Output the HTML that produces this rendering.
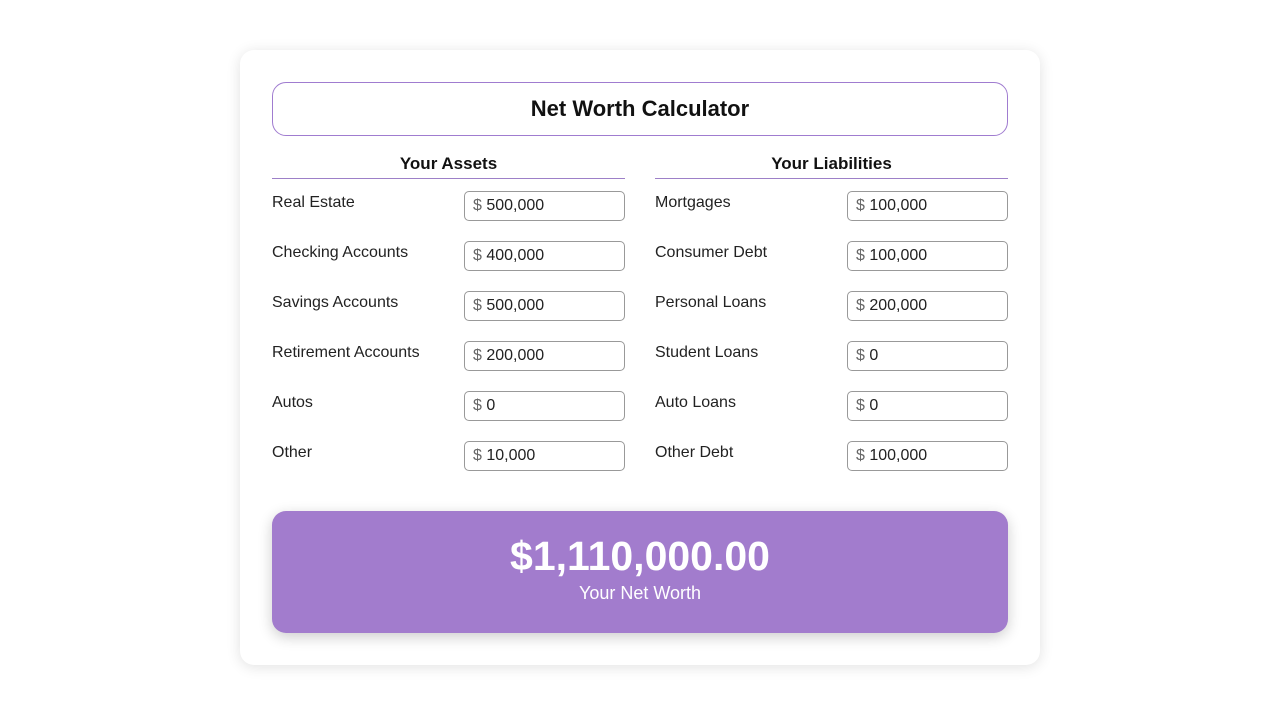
<!DOCTYPE html>
<html><head><style>
body{margin:0;width:1280px;height:720px;background:#fff;font-family:"Liberation Sans",sans-serif;position:relative;overflow:hidden}
.card{position:absolute;left:240px;top:50px;width:800px;height:615px;background:#fff;border-radius:14px;box-shadow:0 2px 14px rgba(0,0,0,.12)}
.title{position:absolute;left:32px;top:32px;width:734px;height:52px;border:1px solid #a07cd0;border-radius:14px;text-align:center;line-height:52px;font-size:22px;font-weight:bold;color:#111}
.col{position:absolute;top:103px;width:353px}
.h{font-size:17px;font-weight:bold;text-align:center;height:25px;line-height:22px;border-bottom:1px solid #9d80c8;color:#111}
.row{position:relative;height:50px}
.row span{position:absolute;left:0;top:15px;font-size:16px;color:#222}
.in{position:absolute;right:0;top:12px;width:151px;height:28px;border:1px solid #999;border-radius:5px;font-size:16px;line-height:28px;padding-left:8px;color:#222}
.in b{font-weight:normal;color:#666}
.res{position:absolute;left:32px;top:461px;width:736px;height:122px;background:#a27ccd;border-radius:14px;box-shadow:0 4px 14px rgba(0,0,0,.2);color:#fff;text-align:center}
.num{font-size:41px;font-weight:bold;margin-top:21px;line-height:48px}
.sub{font-size:18px;margin-top:3px}
</style></head><body>
<div class="card">
<div class="title">Net Worth Calculator</div>
<div class="col" style="left:32px"><div class="h">Your Assets</div>
<div class="row"><span>Real Estate</span><div class="in"><b>$</b> 500,000</div></div>
<div class="row"><span>Checking Accounts</span><div class="in"><b>$</b> 400,000</div></div>
<div class="row"><span>Savings Accounts</span><div class="in"><b>$</b> 500,000</div></div>
<div class="row"><span>Retirement Accounts</span><div class="in"><b>$</b> 200,000</div></div>
<div class="row"><span>Autos</span><div class="in"><b>$</b> 0</div></div>
<div class="row"><span>Other</span><div class="in"><b>$</b> 10,000</div></div>
</div>
<div class="col" style="left:415px"><div class="h">Your Liabilities</div>
<div class="row"><span>Mortgages</span><div class="in"><b>$</b> 100,000</div></div>
<div class="row"><span>Consumer Debt</span><div class="in"><b>$</b> 100,000</div></div>
<div class="row"><span>Personal Loans</span><div class="in"><b>$</b> 200,000</div></div>
<div class="row"><span>Student Loans</span><div class="in"><b>$</b> 0</div></div>
<div class="row"><span>Auto Loans</span><div class="in"><b>$</b> 0</div></div>
<div class="row"><span>Other Debt</span><div class="in"><b>$</b> 100,000</div></div>
</div>
<div class="res"><div class="num">$1,110,000.00</div><div class="sub">Your Net Worth</div></div>
</div>
</body></html>
